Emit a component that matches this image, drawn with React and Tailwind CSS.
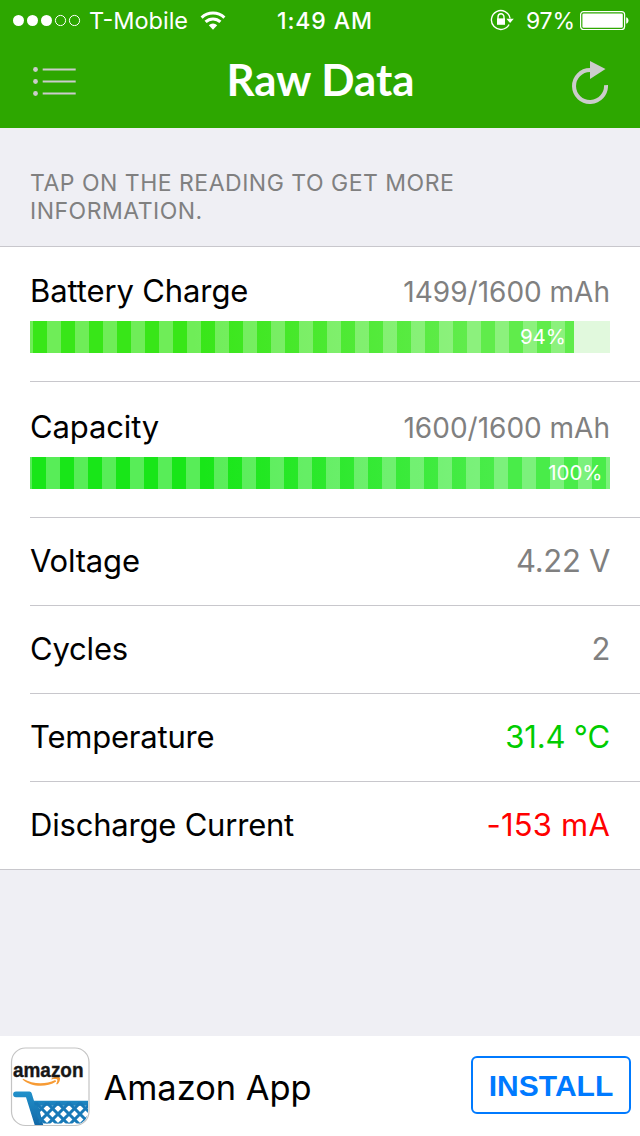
const dots = [true, true, true, false, false];

function StatusBar() {
  return (
    <div className="flex h-10 items-center pl-3 text-[24px] leading-10 text-white">
      <svg className="h-3 w-[70px] shrink-0" viewBox="0 0 70 12">
        {dots.map((full, i) => (
          <circle
            key={i}
            cx={6.5 + i * 14}
            cy="6.5"
            r={full ? 5.5 : 5.1}
            fill={full ? '#fff' : 'none'}
            stroke="#fff"
            strokeWidth={full ? 0 : 1}
          />
        ))}
      </svg>
      <span className="ml-[7px] w-[111px] whitespace-nowrap pt-[2px] text-[23.5px]">T-Mobile</span>
      <svg className="h-[19px] w-[26px] shrink-0" viewBox="0 0 26 19" fill="none" stroke="#fff" strokeWidth="3">
        <path d="M1.6 6.6a16.6 16.6 0 0 1 22.8 0" />
        <path d="M5.6 10.9a10.6 10.6 0 0 1 14.8 0" />
        <path d="M13 18.7l-4.2-4.5a6.3 6.3 0 0 1 8.4 0z" fill="#fff" stroke="none" />
      </svg>
      <span className="ml-[51px] w-[213px] whitespace-nowrap pt-[2px] text-[23px] font-medium tracking-[0.9px]">1:49 AM</span>
      <svg className="h-[22px] w-6 shrink-0" viewBox="0 0 24 22" fill="none" stroke="#fff" strokeWidth="1.4">
        <path d="M19.1 15.5A9.4 9.4 0 1 1 20.1 9.5" />
        <path d="M16.4 9.8h7.4l-3.7 4.2z" fill="#fff" stroke="none" />
        <path d="M8 10V8a3 3.2 0 0 1 6 0v2" />
        <path d="M7 9.4h8v6.4H7z" fill="#fff" stroke="none" />
      </svg>
      <span className="ml-[12px] w-[53px] whitespace-nowrap pt-[2px] text-[23px] tracking-[-0.2px]">97%</span>
      <svg className="h-5 w-[50px] shrink-0" viewBox="0 0 50 20">
        <rect x="1.6" y="1.6" width="44" height="18" rx="3" fill="none" stroke="#fff" strokeWidth="1.2" />
        <rect x="3.4" y="3.4" width="40.4" height="14.4" rx="1.3" fill="#fff" />
        <path d="M47.2 7.2c3 1 3 5.6 0 6.6z" fill="#fff" />
      </svg>
    </div>
  );
}

function NavBar() {
  return (
    <div className="flex h-22 items-start px-8 pt-5">
      <svg className="mt-[6px] h-8 w-[46px]" viewBox="0 0 46 32">
        {[3.5, 15.5, 27.5].map((y) => (
          <g key={y}>
            <circle cx="3.5" cy={y} r="2.4" fill="#cccccc" />
            <path d={`M10.7 ${y}H43.7`} stroke="#cccccc" strokeWidth="2" />
          </g>
        ))}
      </svg>
      <h1 className="mt-[-2px] flex-1 whitespace-nowrap pl-[4px] pr-[11px] text-center font-['Lato',sans-serif] text-[43.8px] font-bold leading-[42px] text-white">
        Raw Data
      </h1>
      <svg className="h-11 w-[38px]" viewBox="0 0 38 44">
        <path d="M20 10A16 16 0 1 0 36 25" fill="none" stroke="#cccccc" strokeWidth="4" />
        <path d="M20 1v18L35.5 9z" fill="#cccccc" />
      </svg>
    </div>
  );
}

function Bar({ kind, percent }) {
  const charge = kind === 'charge';
  return (
    <div className={`mr-[30px] h-8 ${charge ? 'bg-[#e1f9dd]' : 'bg-[#ddf9dd]'}`}>
      <div
        className={`flex h-8 items-center justify-end pr-[7.5px] text-[20.5px] text-white ${
          charge
            ? 'w-[543.5px] bg-[repeating-linear-gradient(90deg,transparent_0_14px,rgba(255,255,255,0.28)_14px_28px),linear-gradient(90deg,#38e618_30%,#60ec4b_80%)] bg-position-[3px_0,0_0]'
            : 'w-[580px] bg-[repeating-linear-gradient(90deg,transparent_0_14px,rgba(255,255,255,0.28)_14px_28px),linear-gradient(90deg,#18e618_30%,#49ec49_80%)] bg-position-[2px_0,0_0]'
        } bg-size-[560px_100%,100%_100%]`}
      >
        <span className="whitespace-nowrap">{percent}</span>
      </div>
    </div>
  );
}

function Reading({ label, value, tone = 'text-[#808080] tracking-[-0.3px]', last }) {
  return (
    <div className={last ? 'border-b border-[#c8c7cc]' : 'pl-[30px]'}>
      <div
        className={`flex items-center justify-between pr-[30px] text-[31px] ${
          last ? 'ml-[30px] h-[87px]' : 'h-[88px] border-b border-[#c8c7cc]'
        }`}
      >
        <span className="tracking-[-0.2px]">{label}</span>
        <span className={tone}>{value}</span>
      </div>
    </div>
  );
}

function BarReading({ label, value, kind, percent }) {
  return (
    <div className="pl-[30px]">
      <div className={`border-b border-[#c8c7cc] ${kind === 'charge' ? 'h-[135px] pt-6' : 'h-[136px] pt-[25px]'}`}>
        <div className="mb-[10px] flex h-10 items-center justify-between pr-[30px] text-[31px]">
          <span className="tracking-[-0.12px]">{label}</span>
          <span className="pt-px text-[28px] text-[#808080]">{value}</span>
        </div>
        <Bar kind={kind} percent={percent} />
      </div>
    </div>
  );
}

function AmazonIcon() {
  return (
    <svg className="mt-px h-20 w-20 shrink-0 overflow-visible" viewBox="0 0 80 80">
      <defs>
        <clipPath id="tile">
          <rect x="2" y="1" width="76" height="77" rx="14" />
        </clipPath>
        <clipPath id="basket">
          <path d="M24 55h54v21.5H29z" />
        </clipPath>
        <linearGradient id="cart" x1="0" y1="0" x2="0" y2="1">
          <stop offset="0" stopColor="#2191cb" />
          <stop offset="1" stopColor="#1267a6" />
        </linearGradient>
      </defs>
      <rect x="1.5" y="1" width="77.5" height="77.5" rx="14" fill="#fff" stroke="#c4c4c4" strokeWidth="1.2" />
      <g clipPath="url(#tile)">
        <path d="M13.2 31.8c10 5.600 22 6 32 1.200l1 1.400C36 41 21 40 12.500 32.500z" fill="#f79b34" />
        <path d="M42 31c4-1.800 7-1.800 8 0 .3 2-.8 5-3 6.500l-.8-.4c1-2.200 1.500-3.800 1-4.500-1-.8-3.500-.4-6-.2z" fill="#f79b34" />
        <path d="M6 44.400h13.500q1.600 0 2.100 1.600l2.400 7.800h54v5H28.300L33.500 79H25L16 50.200H6a2.900 2.900 0 0 1 0-5.800z" fill="url(#cart)" />
        <g clipPath="url(#basket)" stroke="#1879b7" strokeWidth="3">
          {[-7, 4, 15, 26, 37, 48, 59, 70].map((x) => (
            <path key={x} d={`M${x} 56l22 22M${x + 22} 56L${x} 78`} fill="none" />
          ))}
        </g>
      </g>
      <text
        x="3"
        y="29.500"
        fontFamily="Liberation Sans, sans-serif"
        fontWeight="700"
        fontSize="21"
        textLength="70.5"
        lengthAdjust="spacingAndGlyphs"
        fill="#171717"
        stroke="#171717"
        strokeWidth=".4"
      >
        amazon
      </text>
    </svg>
  );
}

export default function App() {
  return (
    <div className="flex h-[1136px] w-[640px] flex-col overflow-hidden bg-[#efeff4] font-['Inter',sans-serif] text-black">
      <header className="h-32 shrink-0 bg-[#2da700]">
        <StatusBar />
        <NavBar />
      </header>
      <main className="flex-1">
        <p className="h-[118px] pl-[30px] pt-[41px] text-[23px] leading-7 tracking-[0.5px] text-[#808080]">
          TAP ON THE READING TO GET MORE
          <br />
          INFORMATION.
        </p>
        <section className="border-t border-[#c8c7cc] bg-white">
          <BarReading label="Battery Charge" value="1499/1600 mAh" kind="charge" percent="94%" />
          <BarReading label="Capacity" value="1600/1600 mAh" kind="capacity" percent="100%" />
          <Reading label="Voltage" value="4.22 V" />
          <Reading label="Cycles" value="2" />
          <Reading label="Temperature" value="31.4 °C" tone="text-[#00cc00] tracking-[-0.15px]" />
          <Reading label="Discharge Current" value="-153 mA" tone="text-[#ff0000] tracking-[0.2px]" last />
        </section>
      </main>
      <footer className="flex h-[100px] shrink-0 items-center bg-white pl-[10px] pr-[9px]">
        <AmazonIcon />
        <span className="ml-[13.5px] flex-1 whitespace-nowrap pt-[4px] text-[34.4px]">Amazon App</span>
        <button className="mt-[-2px] h-[58px] w-40 rounded-md border-2 border-[#007aff] font-['Liberation_Sans',sans-serif] text-[30px] font-bold text-[#007aff]">
          INSTALL
        </button>
      </footer>
    </div>
  );
}
